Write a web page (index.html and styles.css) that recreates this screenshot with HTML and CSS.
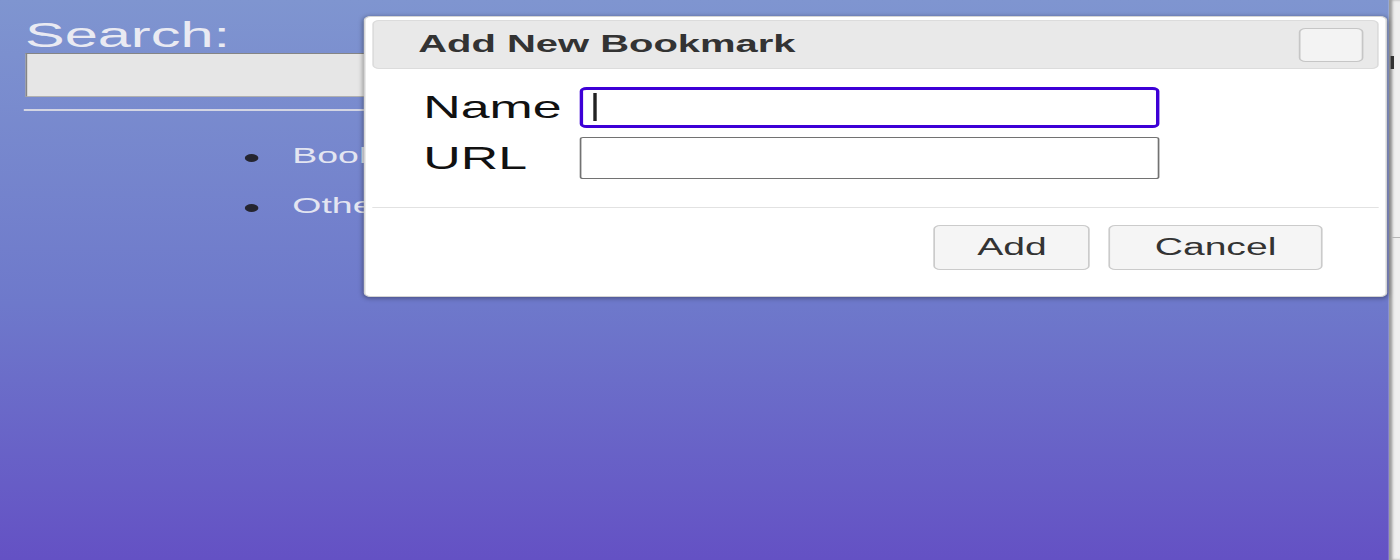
FILE: index.html
```html
<!DOCTYPE html>
<html lang="en">
<head>
<meta charset="utf-8">
<title>Bookmarks</title>
<link rel="stylesheet" href="styles.css">
</head>
<body>
<div class="stage">
  <main class="panel">
    <label class="search-label" for="search">Search:</label>
    <input class="search-input" id="search" type="text">
    <hr class="divider">
    <ul class="folders">
      <li>Bookmarks Bar</li>
      <li>Other Bookmarks</li>
    </ul>
  </main>
  <aside class="side">
    <div class="side-mark"></div>
    <div class="side-rule"></div>
  </aside>

  <div class="dialog" role="dialog" aria-label="Add New Bookmark">
    <div class="titlebar">
      <span class="title">Add New Bookmark</span>
      <button class="close" type="button" aria-label="Close"></button>
    </div>
    <form class="form">
      <label class="field-label" for="bm-name">Name</label>
      <div class="field is-focused"><input class="field-input" id="bm-name" type="text"></div>
      <label class="field-label" for="bm-url">URL</label>
      <div class="field"><input class="field-input" id="bm-url" type="text"></div>
    </form>
    <div class="buttonpane">
      <button class="btn btn-add" type="button">Add</button>
      <button class="btn btn-cancel" type="button">Cancel</button>
    </div>
  </div>
</div>
</body>
</html>
```

FILE: styles.css
```css
html, body {
  margin: 0;
  padding: 0;
  overflow: hidden;
  background: #efefef;
}

body {
  width: 1400px;
  height: 560px;
  font-family: "Liberation Sans", Arial, sans-serif;
}

/* the reference is horizontally stretched; lay out at native width and stretch */
.stage {
  position: relative;
  width: 823.53px;
  height: 560px;
  display: flex;
  transform: scaleX(1.7);
  transform-origin: 0 0;
}

.panel {
  width: 816.5px;
  height: 560px;
  box-sizing: border-box;
  padding: 18px 14px 0 14.7px;
  background: linear-gradient(to bottom, #7f95d0 0%, #6e79cb 54%, #6451c4 100%);
  overflow: hidden;
}

.search-label {
  display: block;
  font-size: 35px;
  line-height: 34px;
  color: #e9eaf2;
}

.search-input {
  display: block;
  width: 100%;
  height: 44px;
  box-sizing: border-box;
  margin: 1px 0 0;
  background: #e6e6e6;
  border: 1px solid #858585;
  border-bottom-color: #b0b0b0;
  border-right-color: #b0b0b0;
  padding: 0 6px;
  outline: none;
}

.divider {
  margin: 12px 0 0 -1.2px;
  border: 0;
  height: 2px;
  background: #d3d5e3;
}

.folders {
  list-style: none;
  margin: 19.7px 0 0;
  padding: 0 0 0 129.3px;
}

.folders li {
  display: flex;
  align-items: center;
  height: 50px;
  font-size: 22px;
  color: #e3e5f1;
}

.folders li::before {
  content: "";
  width: 8px;
  height: 8px;
  margin: 4px 20px 0 0;
  border-radius: 50%;
  background: #252530;
}

.side {
  flex: 1;
  height: 560px;
  background: #efefef;
  box-shadow: inset 2px 0 2px rgba(0, 0, 0, 0.35);
  display: flex;
  flex-direction: column;
}

.side-mark {
  margin: 56px 0 0 1px;
  width: 2px;
  height: 13px;
  background: #333;
}

.side-rule {
  margin: 168px 0 0 2px;
  height: 1px;
  background: #b5b5b5;
}

/* dialog overlay */
.dialog {
  position: absolute;
  left: 213.5px;
  top: 16px;
  width: 602.5px;
  height: 281px;
  box-sizing: border-box;
  padding: 3px 4.5px 0;
  background: #fff;
  border: 1px solid #d4d4d4;
  border-radius: 4px;
  box-shadow: 0 1px 4px rgba(0, 0, 0, 0.4);
  display: flex;
  flex-direction: column;
}

.titlebar {
  display: flex;
  align-items: center;
  justify-content: space-between;
  height: 49px;
  box-sizing: border-box;
  padding: 0 8px 0 26px;
  background: #e9e9e9;
  border: 1px solid #dcdcdc;
  border-radius: 4px;
}

.title {
  font-size: 23.5px;
  font-weight: bold;
  color: #333;
}

.close {
  width: 37.6px;
  height: 34px;
  box-sizing: border-box;
  padding: 0;
  background: #f3f3f3;
  border: 1px solid #c6c6c6;
  border-radius: 4px;
}

.form {
  display: grid;
  grid-template-columns: 92px 341px;
  grid-template-rows: 41px 42px;
  row-gap: 9px;
  align-items: center;
  margin: 0;
  padding: 18px 0 28px 30px;
  border-bottom: 1px solid #e2e2e2;
}

.field-label {
  font-size: 30.5px;
  color: #111;
}

.field {
  position: relative;
  height: 100%;
}

.field-input {
  display: block;
  width: 100%;
  height: 100%;
  box-sizing: border-box;
  margin: 0;
  padding: 0 6px;
  background: #fff;
  border: 1px solid #727272;
  border-left-width: 1.5px;
  border-right-width: 1.5px;
  border-radius: 2px;
  outline: none;
}

.field.is-focused .field-input {
  border: 3px solid #3d00d6;
  border-left-width: 2px;
  border-right-width: 2px;
  border-radius: 4px;
}

.field.is-focused::after {
  content: "";
  position: absolute;
  left: 8.2px;
  top: 6px;
  width: 1.6px;
  height: 28px;
  background: #222;
}

.buttonpane {
  display: flex;
  justify-content: flex-end;
  gap: 10.6px;
  padding: 17px 32.4px 0 0;
}

.btn {
  height: 45px;
  box-sizing: border-box;
  font-family: "Liberation Sans", Arial, sans-serif;
  font-size: 23px;
  color: #333;
  background: #f5f5f5;
  border: 1px solid #cbcbcb;
  border-radius: 4px;
}

.btn-add {
  padding: 0 24.5px;
}

.btn-cancel {
  padding: 0 26.3px;
}
```
